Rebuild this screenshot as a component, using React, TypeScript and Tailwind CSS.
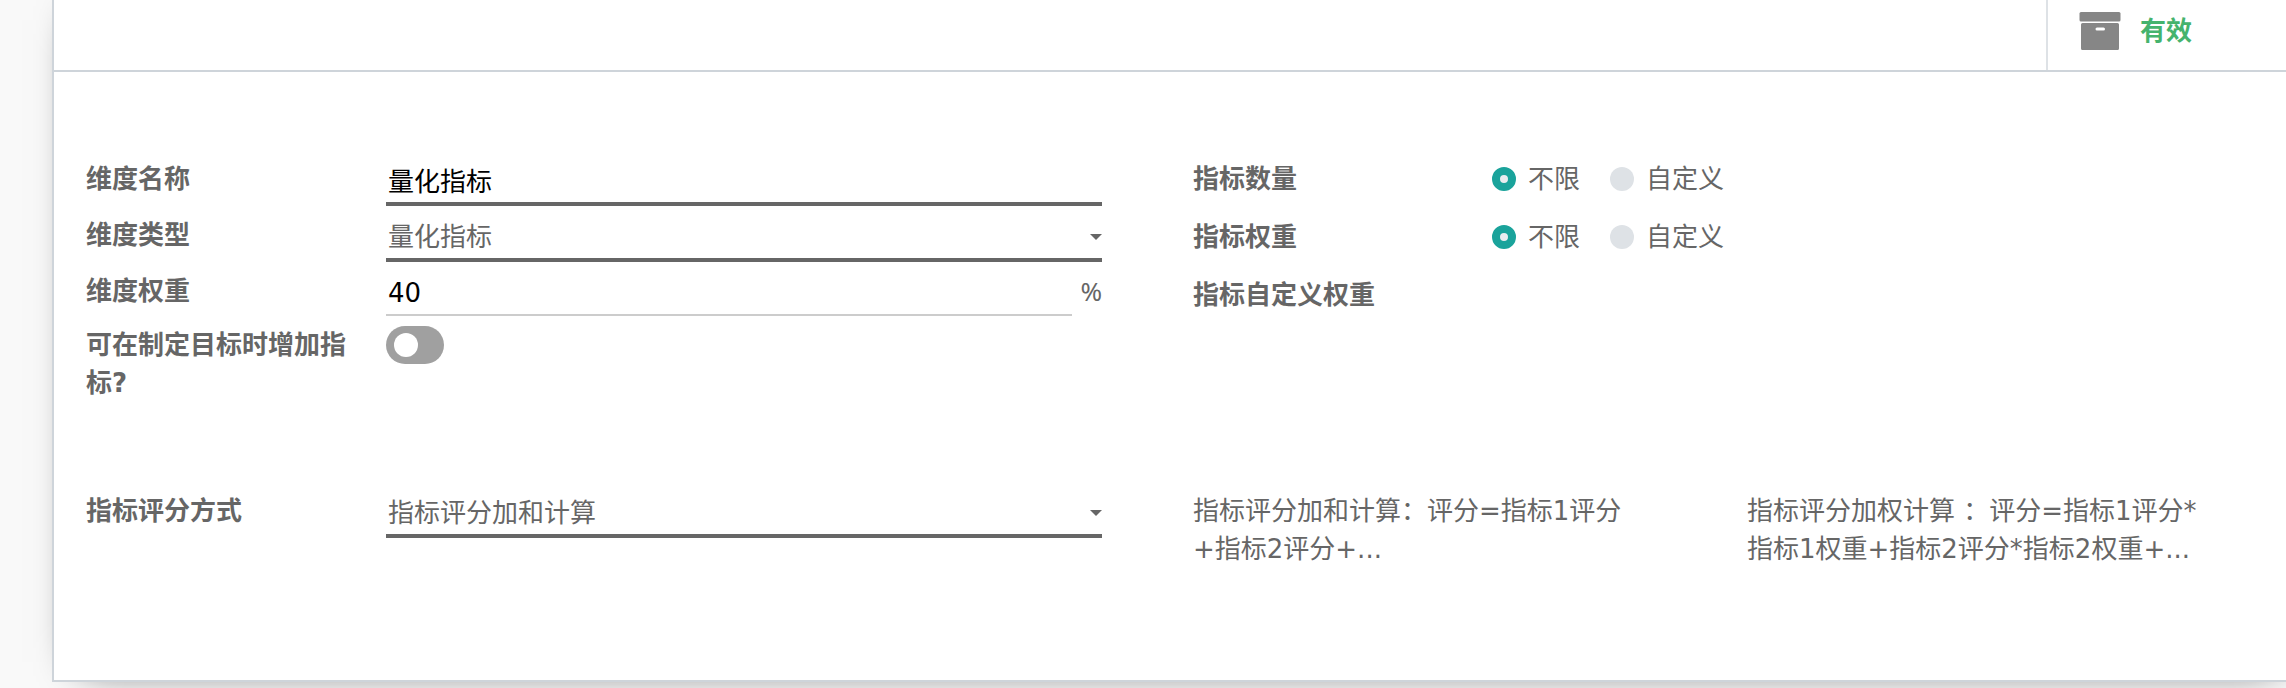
import { useState, type ReactNode } from 'react';

const labelText = 'font-bold text-[#666666]';

function Field({ label, htmlFor, children }: { label: string; htmlFor?: string; children?: ReactNode }) {
  return (
    <div className="flex items-start">
      <label htmlFor={htmlFor} className={`w-[300px] shrink-0 pr-8 ${labelText}`}>
        {label}
      </label>
      <div className="min-w-0 flex-1">{children}</div>
    </div>
  );
}

function SelectBox({ id, options }: { id: string; options: string[] }) {
  return (
    <div className="relative flex border-b-4 border-[#666666]">
      <select id={id} className="h-[42px] w-full appearance-none bg-transparent pr-6 pl-[2px] text-[#666666] outline-none">
        {options.map((option) => (
          <option key={option}>{option}</option>
        ))}
      </select>
      <svg viewBox="0 0 12 6" className="pointer-events-none absolute top-[18px] right-0 h-[6px] w-3" aria-hidden="true">
        <path d="M0 0H12L6 6Z" fill="#666666" />
      </svg>
    </div>
  );
}

function RadioPair({ name, legend }: { name: string; legend: string }) {
  const [value, setValue] = useState('不限');
  return (
    <fieldset className="flex items-start">
      <legend className={`float-left w-[299px] shrink-0 ${labelText}`}>{legend}</legend>
      <div className="flex gap-[30px]">
        {['不限', '自定义'].map((option) => (
          <label key={option} className="flex items-center gap-3">
            <input
              type="radio"
              name={name}
              value={option}
              checked={value === option}
              onChange={() => setValue(option)}
              className="m-0 size-6 shrink-0 appearance-none rounded-full bg-[#dee2e6] checked:border-8 checked:border-[#1aa39b] checked:bg-[#e9ecef]"
            />
            <span>{option}</span>
          </label>
        ))}
      </div>
    </fieldset>
  );
}

export default function App() {
  const [name, setName] = useState('量化指标');
  const [weight, setWeight] = useState('40');
  const [canAdd, setCanAdd] = useState(false);

  return (
    <div className="overflow-hidden bg-[#f9f9f9] pb-[6px] pl-[52px] font-['DejaVu_Sans','Noto_Sans_CJK_SC',sans-serif] text-[26px] leading-[38px] text-[#666666]">
      <main className="-mt-5 -mr-5 border-2 border-[#ced4da] bg-white pt-[18px] shadow-[0_10px_40px_-30px_#000]">
        <header className="flex h-[72px] justify-end border-b-2 border-[#ced4da]">
          <button
            type="button"
            className="flex w-[258px] items-center gap-[19px] border-l-2 border-[#dee2e6] pb-[9px] pl-[31px] font-bold text-[#45b36d]"
          >
            <svg viewBox="0 0 42 38" className="h-[38px] w-[42px]" fill="#868686" aria-hidden="true">
              <rect x="0.5" y="0" width="41" height="9.5" rx="1.5" />
              <path
                fillRule="evenodd"
                d="M3.5 11H38.5Q40 11 40 12.5V36.5Q40 38 38.5 38H3.5Q2 38 2 36.5V12.5Q2 11 3.5 11ZM18 15.5A1.5 1.5 0 0 0 18 18.5H24.500A1.5 1.5 0 0 0 24.500 15.5Z"
              />
            </svg>
            有效
          </button>
        </header>

        <form className="pr-[104px] pb-[112px] pl-8">
          <div className="grid grid-cols-[1016fr_1007fr] gap-x-[91px] pt-[88px]">
            <div className="flex flex-col gap-[10px]">
              <Field label="维度名称" htmlFor="name">
                <input
                  id="name"
                  value={name}
                  onChange={(e) => setName(e.target.value)}
                  className="block h-[46px] w-full border-b-4 border-[#666666] bg-transparent pb-1 pl-[2px] text-black outline-none"
                />
              </Field>
              <Field label="维度类型" htmlFor="type">
                <SelectBox id="type" options={['量化指标', '定性指标']} />
              </Field>
              <Field label="维度权重" htmlFor="weight">
                <div className="flex items-start gap-2">
                  <input
                    id="weight"
                    value={weight}
                    onChange={(e) => setWeight(e.target.value)}
                    className="h-11 min-w-0 flex-1 border-b-2 border-[#cccccc] bg-transparent pl-[2px] text-black outline-none"
                  />
                  <span className="font-['Noto_Sans',sans-serif]">%</span>
                </div>
              </Field>
              <Field label="可在制定目标时增加指标?" htmlFor="can-add">
                <input
                  id="can-add"
                  type="checkbox"
                  role="switch"
                  checked={canAdd}
                  onChange={(e) => setCanAdd(e.target.checked)}
                  className="flex h-[38px] w-[58px] appearance-none items-center rounded-full bg-[#a0a0a0] px-2 before:size-6 before:rounded-full before:bg-white checked:justify-end checked:bg-[#1aa39b]"
                />
              </Field>
            </div>

            <div className="flex flex-col gap-5">
              <RadioPair name="count" legend="指标数量" />
              <RadioPair name="weight-mode" legend="指标权重" />
              <Field label="指标自定义权重" />
            </div>
          </div>

          <div className="grid grid-cols-[1016fr_1007fr] gap-x-[91px] pt-[90px]">
            <Field label="指标评分方式" htmlFor="method">
              <SelectBox id="method" options={['指标评分加和计算', '指标评分加权计算']} />
            </Field>
            <div className="grid grid-cols-[446fr_453fr] gap-x-[108px]">
              <p>指标评分加和计算：评分=指标1评分+指标2评分+...</p>
              <p>指标评分加权计算 ：评分=指标1评分*指标1权重+指标2评分*指标2权重+...</p>
            </div>
          </div>
        </form>
      </main>
    </div>
  );
}
